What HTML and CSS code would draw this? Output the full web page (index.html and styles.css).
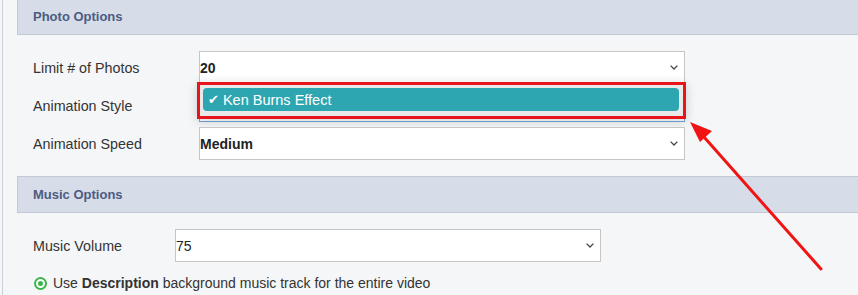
FILE: index.html
```html
<!DOCTYPE html>
<html>
<head>
<meta charset="utf-8">
<link rel="stylesheet" href="styles.css">
</head>
<body>
<div class="page">
  <section class="panel panel-first">
    <div class="panel-head">Photo Options</div>
    <div class="panel-body">
      <div class="row">
        <label class="lbl">Limit # of Photos</label>
        <div class="select wide bold"><span>20</span><svg class="chev" width="8" height="5" viewBox="0 0 8 5"><path d="M0.6 0.6 L4 4 L7.4 0.6" fill="none" stroke="#444" stroke-width="1.3"/></svg></div>
      </div>
      <div class="row">
        <label class="lbl">Animation Style</label>
        <div class="select wide bold focused">
          <div class="dropdown">
            <div class="option"><span class="check">✔</span>Ken Burns Effect</div>
          </div>
        </div>
      </div>
      <div class="row">
        <label class="lbl">Animation Speed</label>
        <div class="select wide bold"><span>Medium</span><svg class="chev" width="8" height="5" viewBox="0 0 8 5"><path d="M0.6 0.6 L4 4 L7.4 0.6" fill="none" stroke="#444" stroke-width="1.3"/></svg></div>
      </div>
    </div>
  </section>
  <section class="panel">
    <div class="panel-head">Music Options</div>
    <div class="panel-body music">
      <div class="row">
        <label class="lbl lbl-music">Music Volume</label>
        <div class="select narrow"><span>75</span><svg class="chev" width="8" height="5" viewBox="0 0 8 5"><path d="M0.6 0.6 L4 4 L7.4 0.6" fill="none" stroke="#444" stroke-width="1.3"/></svg></div>
      </div>
      <div class="radio-row">
        <span class="radio"><span class="dot"></span></span>
        <span>Use <b>Description</b> background music track for the entire video</span>
      </div>
    </div>
  </section>
</div>
<svg class="annot" width="858" height="295" viewBox="0 0 858 295">
  <line x1="821" y1="269" x2="704" y2="137" stroke="#f01414" stroke-width="3" stroke-linecap="round"/>
  <polygon points="690,122 712,131 700,142" fill="#f01414"/>
</svg>
</body>
</html>
```
FILE: styles.css
```css
html, body {
  margin: 0;
  padding: 0;
}
body {
  background: #f5f6f8;
  font-family: "Liberation Sans", Arial, sans-serif;
  font-size: 14px;
  color: #333;
  width: 858px;
  height: 295px;
  overflow: hidden;
  position: relative;
}
.page {
  margin-left: 2px;
  border-left: 1px solid #cbd0d8;
  padding-left: 14px;
  min-height: 295px;
}
.panel-first {
  margin-top: -2px;
}
.panel-head {
  height: 35px;
  border: 1px solid #c3c9d4;
  border-right: none;
  background: #d6dde8;
  display: flex;
  align-items: center;
  padding-left: 15px;
  font-weight: bold;
  font-size: 13px;
  color: #4d5b83;
}
.panel-body {
  padding: 16px 0 16px 16px;
}
.row {
  display: flex;
  align-items: center;
  height: 33px;
  margin-bottom: 5px;
}
.row:last-child {
  margin-bottom: 0;
}
.lbl {
  width: 166px;
  flex: none;
  color: #333;
  font-size: 14.3px;
}
.lbl-music {
  width: 142px;
}
.select {
  position: relative;
  box-sizing: border-box;
  height: 33px;
  background: #fff;
  border: 1px solid #c6c6c6;
  display: flex;
  align-items: center;
  justify-content: space-between;
  padding: 0 6px 0 0;
  color: #222;
}
.select.bold {
  font-weight: bold;
}
.wide {
  width: 486px;
}
.narrow {
  width: 426px;
}
.focused {
  border-color: #6fa8e0;
}
.chev {
  display: block;
}
.dropdown {
  position: absolute;
  left: -3px;
  top: -8px;
  width: 489px;
  height: 37px;
  box-sizing: border-box;
  border: 3px solid #e8141c;
  background: #e9e9e9;
  padding: 3px 4px 5px 3px;
  box-shadow: 0 2px 10px rgba(0, 0, 0, 0.18);
  font-weight: normal;
}
.option {
  height: 100%;
  background: #2ea6b2;
  border-radius: 4px;
  color: #fff;
  display: flex;
  align-items: center;
  padding-left: 5px;
  font-size: 14.5px;
}
.check {
  margin-right: 4px;
  font-family: "DejaVu Sans", sans-serif;
  font-size: 13px;
}
.music .row {
  margin-bottom: 0;
}
.radio-row {
  display: flex;
  align-items: center;
  margin-top: 13px;
  height: 16px;
  padding-left: 1px;
  color: #333;
}
.radio {
  width: 13px;
  height: 13px;
  box-sizing: border-box;
  border: 2px solid #3ab54a;
  border-radius: 50%;
  display: flex;
  align-items: center;
  justify-content: center;
  margin-right: 6px;
  background: #fff;
}
.dot {
  width: 5px;
  height: 5px;
  border-radius: 50%;
  background: #3ab54a;
}
.annot {
  position: absolute;
  left: 0;
  top: 0;
  pointer-events: none;
}
```
